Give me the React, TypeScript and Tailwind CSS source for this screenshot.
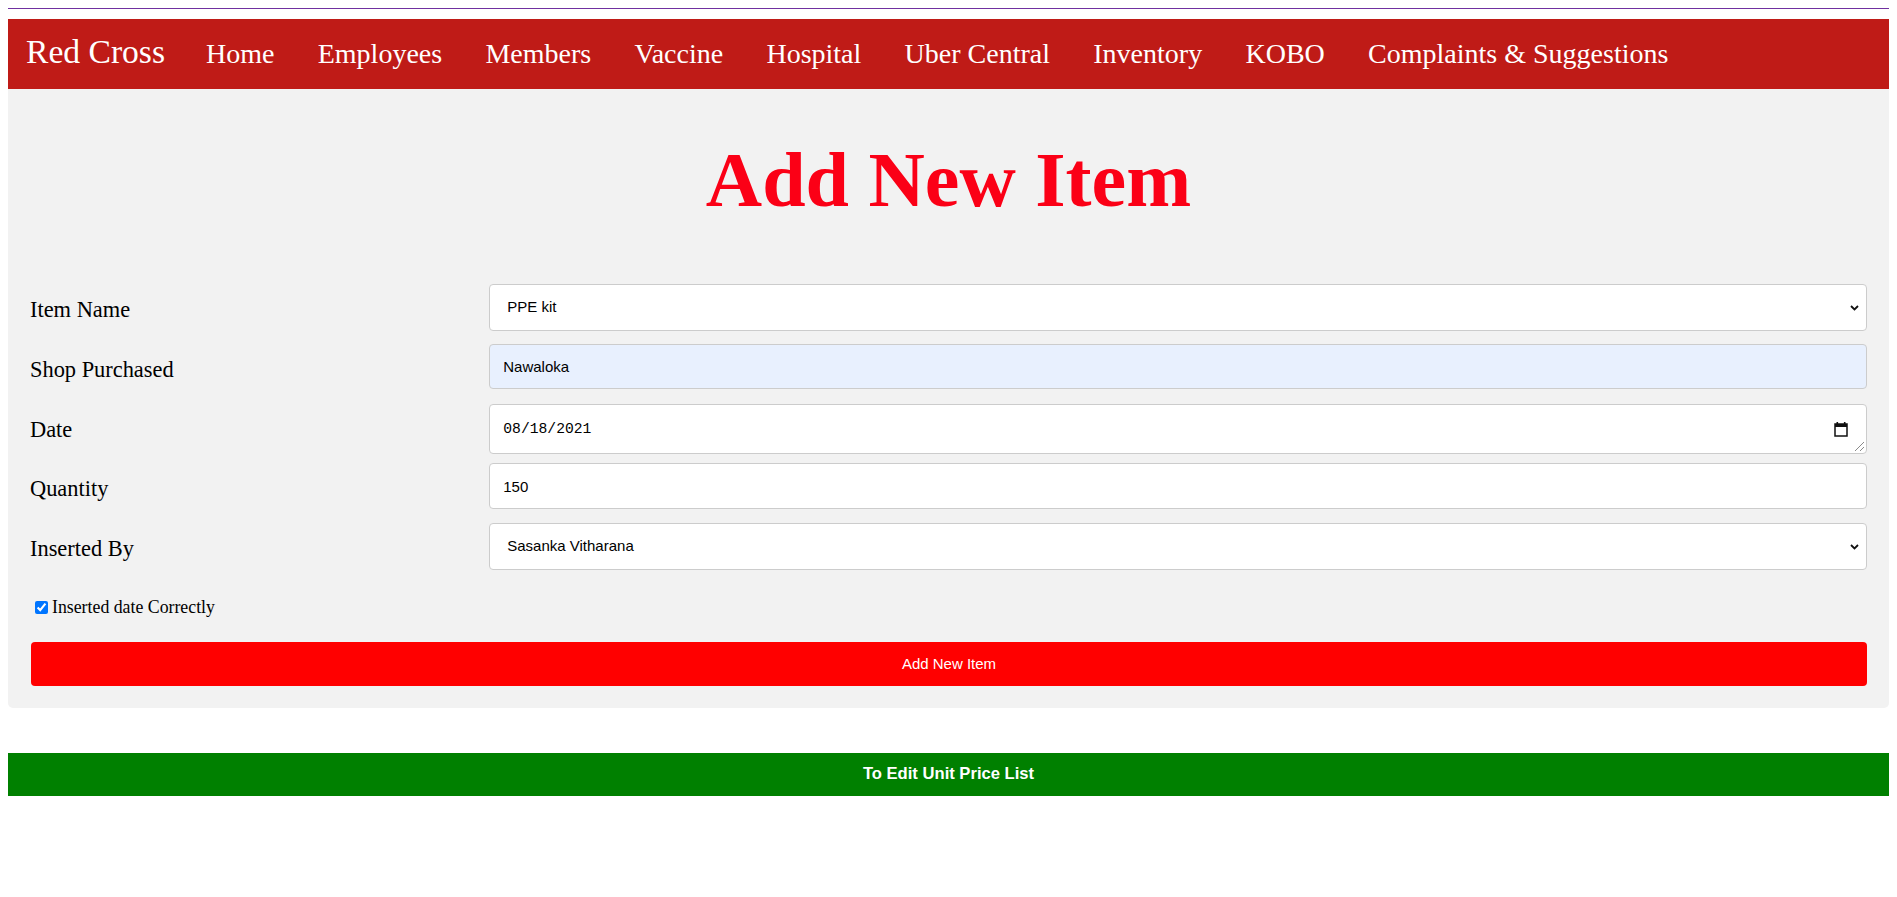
import { FC, ReactNode } from 'react';

const navLinks = [
  'Home',
  'Employees',
  'Members',
  'Vaccine',
  'Hospital',
  'Uber Central',
  'Inventory',
  'KOBO',
  'Complaints & Suggestions',
];

const fieldBase = `
  block w-full h-full
  rounded-[4px] border border-[#cccccc]
  text-black
  outline-none
`;

const fieldClasses = `${fieldBase} text-[15px] font-['Liberation_Sans',Arial,sans-serif]`;

const Chevron: FC = () => (
  <svg
    className="pointer-events-none absolute right-[8px] top-1/2 -translate-y-1/2"
    width="9"
    height="6"
    viewBox="0 0 9 6"
  >
    <path d="M1 1l3.5 3.5L8 1" fill="none" stroke="#111" strokeWidth="1.8" />
  </svg>
);

interface FormRowProps {
  label: string;
  className: string;
  children: ReactNode;
}

const FormRow: FC<FormRowProps> = ({ label, className, children }) => (
  <div className={`flex ${className}`}>
    <div className="w-1/4">
      <label className="block pt-[15px] text-[22.4px] leading-none text-black">{label}</label>
    </div>
    <div className="relative w-3/4">{children}</div>
  </div>
);

export default function App() {
  return (
    <div className="min-h-screen bg-white px-2 pt-2 font-['Liberation_Serif','Times_New_Roman',serif]">
      <div className="h-px bg-[#7030a0]" />

      <nav className="mt-[10px] flex h-[70px] items-center bg-[#bf1b17] pb-[4px] pl-[18px]">
        <div className="flex items-baseline">
          <a href="#" className="mr-[41px] text-[33.6px] leading-none text-white">
            Red Cross
          </a>
          <ul className="flex items-baseline gap-[43.3px]">
            {navLinks.map(link => (
              <li key={link}>
                <a href="#" className="text-[28px] leading-none text-white">
                  {link}
                </a>
              </li>
            ))}
          </ul>
        </div>
      </nav>

      <div className="rounded-b-[5px] bg-[#f2f2f2] px-[22px] pt-[52px] pb-[22px]">
        <h1 className="text-center text-[78px] font-bold leading-none text-[#fb0016]">
          Add New Item
        </h1>

        <form className="mt-[65px]">
          <FormRow label="Item Name" className="h-[47px]">
            <select className={`${fieldClasses} appearance-none bg-white pl-[17px]`} defaultValue="PPE kit">
              <option>PPE kit</option>
              <option>Face Mask</option>
              <option>Sanitizer</option>
            </select>
            <Chevron />
          </FormRow>

          <FormRow label="Shop Purchased" className="mt-[13px] h-[45px]">
            <input type="text" defaultValue="Nawaloka" className={`${fieldClasses} bg-[#e8f0fe] pl-[13px]`} />
          </FormRow>

          <FormRow label="Date" className="mt-[15px] h-[50px]">
            <input
              type="text"
              defaultValue="08/18/2021"
              className={`${fieldBase} bg-white pl-[13px] font-['Liberation_Mono','Courier_New',monospace] text-[14.7px]`}
            />
            <svg
              className="pointer-events-none absolute right-[19px] top-1/2 -translate-y-1/2"
              width="14"
              height="16"
              viewBox="0 0 14 16"
            >
              <rect x="1" y="3" width="12" height="12" fill="none" stroke="#111" strokeWidth="1.5" />
              <rect x="1" y="3" width="12" height="3" fill="#111" />
              <rect x="2.5" y="1" width="1.6" height="3" fill="#111" />
              <rect x="9.9" y="1" width="1.6" height="3" fill="#111" />
            </svg>
            <svg
              className="pointer-events-none absolute right-[2px] bottom-[2px]"
              width="11"
              height="11"
              viewBox="0 0 11 11"
            >
              <path d="M10 1L1 10M10 6L6 10" stroke="#8a8a8a" strokeWidth="1" />
            </svg>
          </FormRow>

          <FormRow label="Quantity" className="mt-[9px] h-[46px]">
            <input type="text" defaultValue="150" className={`${fieldClasses} bg-white pl-[13px]`} />
          </FormRow>

          <FormRow label="Inserted By" className="mt-[14px] h-[47px]">
            <select className={`${fieldClasses} appearance-none bg-white pl-[17px]`} defaultValue="Sasanka Vitharana">
              <option>Sasanka Vitharana</option>
              <option>Other</option>
            </select>
            <Chevron />
          </FormRow>

          <label className="mt-[29px] flex h-[17.8px] items-center text-[17.8px] leading-none text-black">
            <input type="checkbox" defaultChecked className="ml-[5px] mr-[4px] h-[13px] w-[13px] accent-[#0075ff]" />
            Inserted date Correctly
          </label>

          <button
            type="button"
            className="mt-[25px] ml-px block h-[44px] w-[calc(100%-1px)] rounded-[4px] bg-[#ff0000] font-['Liberation_Sans',Arial,sans-serif] text-[15px] text-white"
          >
            Add New Item
          </button>
        </form>
      </div>

      <a
        href="#"
        className="mt-[45px] flex h-[43px] items-center justify-center bg-[#008000] font-['Liberation_Sans',Arial,sans-serif] text-[16.6px] font-bold text-white"
      >
        To Edit Unit Price List
      </a>
    </div>
  );
}
